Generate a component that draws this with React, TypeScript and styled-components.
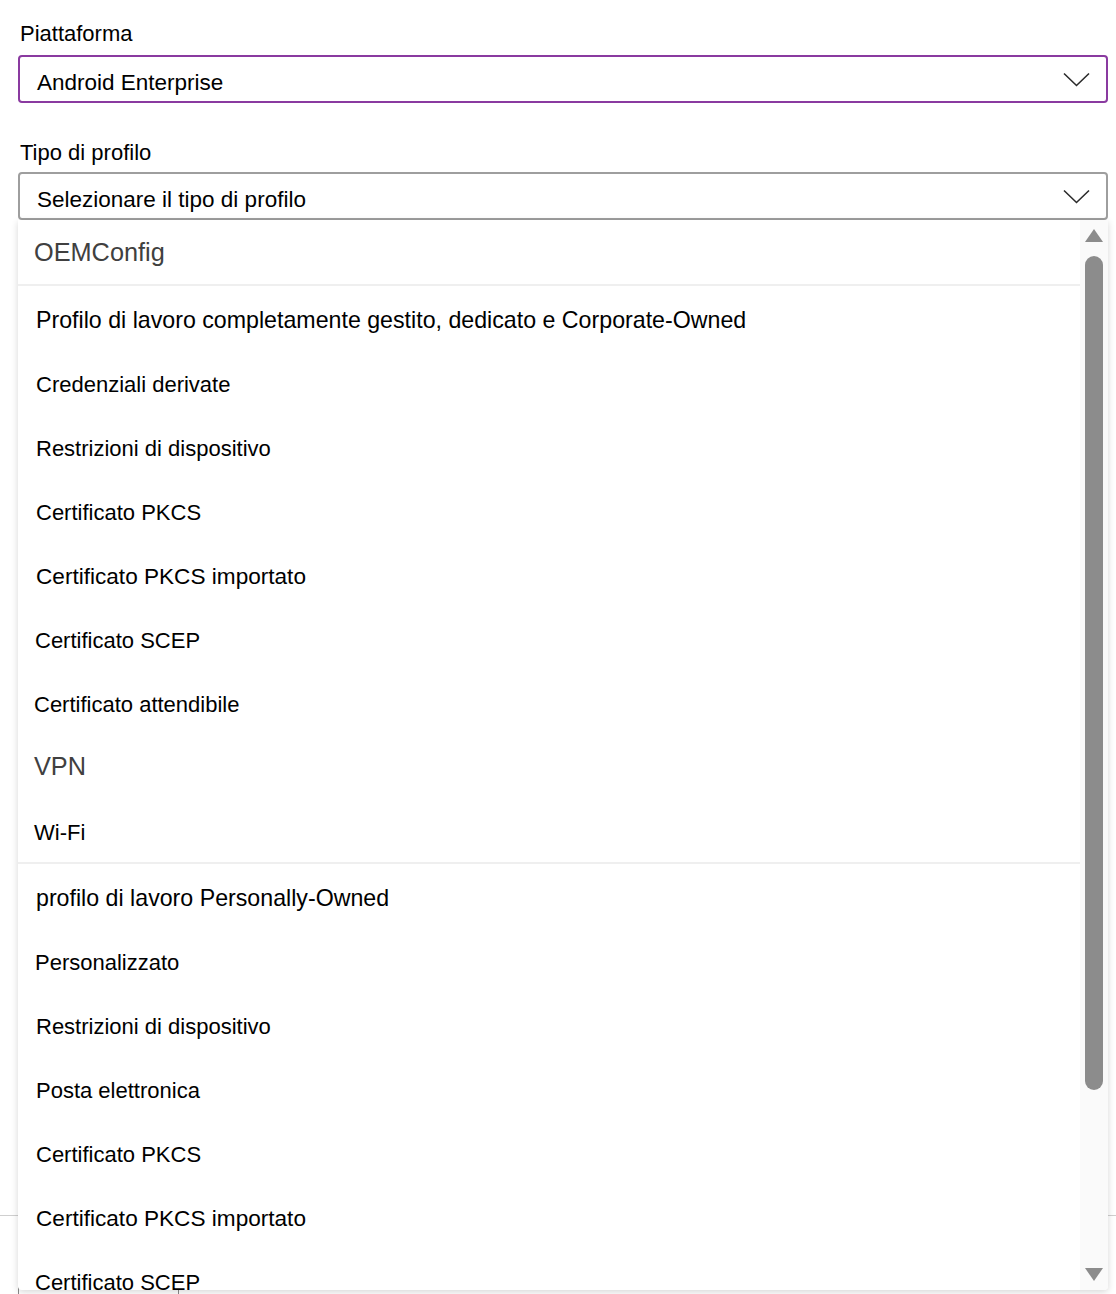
import React from 'react';
import styled, { createGlobalStyle } from 'styled-components';

const GlobalStyle = createGlobalStyle`
  html, body {
    margin: 0;
    padding: 0;
    background: #fff;
  }
  body {
    font-family: 'Liberation Sans', Arial, sans-serif;
    color: #000;
  }
`;

const Page = styled.div`
  height: 1294px;
  overflow: hidden;
  display: flex;
  flex-direction: column;
  background: #fff;
`;

const Form = styled.div`
  padding: 20px 8px 0 18px;
  display: flex;
  flex-direction: column;
  gap: 34px;
`;

const Field = styled.div`
  display: flex;
  flex-direction: column;
  gap: 7px;
`;

const Label = styled.label<{ $shift?: number }>`
  font-size: 22px;
  line-height: 28px;
  padding-left: 2px;
  margin-top: ${(p) => p.$shift ?? 0}px;
  margin-bottom: ${(p) => -(p.$shift ?? 0)}px;
  color: #000;
`;

const SelectWrap = styled.div`
  position: relative;
`;

const SelectBox = styled.div<{ $active?: boolean }>`
  height: 48px;
  box-sizing: border-box;
  border: 2px solid ${(p) => (p.$active ? '#8a3aa0' : '#9e9e9e')};
  border-radius: 4px;
  display: flex;
  align-items: center;
  justify-content: space-between;
  padding: 7px 16px 0 17px;
  font-size: 22.5px;
  color: #000;
`;

const Chevron = styled.svg`
  width: 27px;
  height: 15px;
  margin-top: -6px;
  flex-shrink: 0;
`;

const Dropdown = styled.div`
  position: absolute;
  top: 100%;
  left: 0;
  right: 0;
  height: 1070px;
  background: #fff;
  border-radius: 0 0 4px 4px;
  box-shadow: 0 2px 7px rgba(0, 0, 0, 0.16);
  display: flex;
  overflow: hidden;
  z-index: 10;
`;

const List = styled.div`
  flex: 1;
  display: flex;
  flex-direction: column;
  overflow: hidden;
`;

const GroupHeader = styled.div<{ $pad?: number }>`
  height: 64px;
  flex-shrink: 0;
  display: flex;
  align-items: center;
  padding-left: ${(p) => p.$pad ?? 16}px;
  font-size: 25.3px;
  color: #404040;
`;

const Item = styled.div<{ $pad?: number; $size?: number }>`
  height: 64px;
  flex-shrink: 0;
  display: flex;
  align-items: center;
  padding-left: ${(p) => p.$pad ?? 18}px;
  padding-top: 5px;
  box-sizing: border-box;
  font-size: ${(p) => p.$size ?? 22}px;
  color: #000;
`;

const Separator = styled.div`
  height: 2px;
  flex-shrink: 0;
  background: #efefef;
`;

const ScrollTrack = styled.div`
  width: 28px;
  background: #fafafa;
  display: flex;
  flex-direction: column;
  align-items: center;
  padding: 9px 0 9px 0;
  box-sizing: border-box;
`;

const ArrowUp = styled.div`
  width: 0;
  height: 0;
  border-left: 9px solid transparent;
  border-right: 9px solid transparent;
  border-bottom: 13px solid #8c8c8c;
  margin-left: -1px;
`;

const ArrowDown = styled.div`
  width: 0;
  height: 0;
  border-left: 9px solid transparent;
  border-right: 9px solid transparent;
  border-top: 13px solid #8c8c8c;
  margin-top: auto;
  margin-left: -1px;
`;

const Thumb = styled.div`
  width: 18px;
  height: 834px;
  margin-top: 14px;
  margin-left: -1px;
  border-radius: 9px;
  background: #8c8c8c;
`;

const Footer = styled.div`
  margin-top: auto;
  height: 79px;
  border-top: 1px solid #cfcfcf;
  padding: 70px 0 0 18px;
  box-sizing: border-box;
`;

const FooterButton = styled.div`
  width: 159px;
  height: 40px;
  border: 1px solid #8a8a8a;
  border-radius: 2px;
`;

type Row =
  | { kind: 'header'; text: string; pad?: number }
  | { kind: 'item'; text: string; pad?: number; size?: number }
  | { kind: 'sep' };

const rows: Row[] = [
  { kind: 'header', text: 'OEMConfig' },
  { kind: 'sep' },
  { kind: 'item', text: 'Profilo di lavoro completamente gestito, dedicato e Corporate-Owned', size: 23.2 },
  { kind: 'item', text: 'Credenziali derivate' },
  { kind: 'item', text: 'Restrizioni di dispositivo' },
  { kind: 'item', text: 'Certificato PKCS' },
  { kind: 'item', text: 'Certificato PKCS importato', size: 22.6 },
  { kind: 'item', text: 'Certificato SCEP', pad: 17 },
  { kind: 'item', text: 'Certificato attendibile', pad: 16 },
  { kind: 'header', text: 'VPN', pad: 16 },
  { kind: 'item', text: 'Wi-Fi', pad: 16 },
  { kind: 'sep' },
  { kind: 'item', text: 'profilo di lavoro Personally-Owned', size: 23.2 },
  { kind: 'item', text: 'Personalizzato', pad: 17 },
  { kind: 'item', text: 'Restrizioni di dispositivo' },
  { kind: 'item', text: 'Posta elettronica' },
  { kind: 'item', text: 'Certificato PKCS' },
  { kind: 'item', text: 'Certificato PKCS importato', size: 22.6 },
  { kind: 'item', text: 'Certificato SCEP', pad: 17 },
];

const ChevronIcon = () => (
  <Chevron viewBox="0 0 27 15" fill="none">
    <polyline points="1,1.5 13.5,13.5 26,1.5" stroke="#2b2b2b" strokeWidth="1.6" />
  </Chevron>
);

const App: React.FC = () => {
  return (
    <Page>
      <GlobalStyle />
      <Form>
        <Field>
          <Label>Piattaforma</Label>
          <SelectBox $active>
            <span>Android Enterprise</span>
            <ChevronIcon />
          </SelectBox>
        </Field>
        <Field>
          <Label $shift={2}>Tipo di profilo</Label>
          <SelectWrap>
            <SelectBox>
              <span>Selezionare il tipo di profilo</span>
              <ChevronIcon />
            </SelectBox>
            <Dropdown>
              <List>
                {rows.map((row, i) => {
                  if (row.kind === 'sep') return <Separator key={i} />;
                  if (row.kind === 'header')
                    return (
                      <GroupHeader key={i} $pad={row.pad}>
                        {row.text}
                      </GroupHeader>
                    );
                  return (
                    <Item key={i} $pad={row.pad} $size={row.size}>
                      {row.text}
                    </Item>
                  );
                })}
              </List>
              <ScrollTrack>
                <ArrowUp />
                <Thumb />
                <ArrowDown />
              </ScrollTrack>
            </Dropdown>
          </SelectWrap>
        </Field>
      </Form>
      <Footer>
        <FooterButton />
      </Footer>
    </Page>
  );
};

export default App;
